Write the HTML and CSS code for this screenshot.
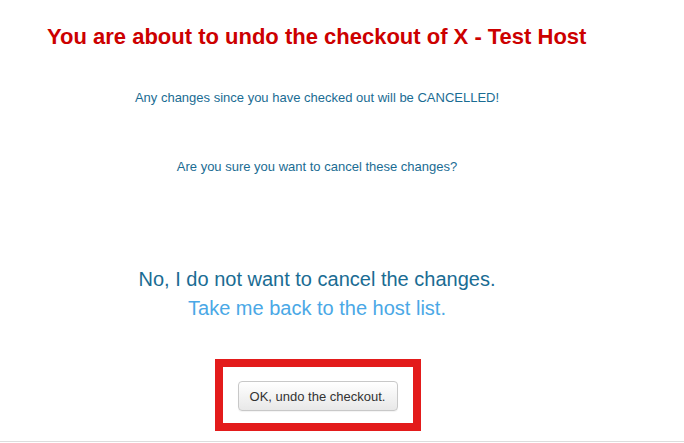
FILE: index.html
```html
<!DOCTYPE html>
<html lang="en">
<head>
    <meta charset="UTF-8">
    <title>Undo checkout</title>
    <link rel="stylesheet" href="styles.css">
</head>
<body>
    <div class="container">
        <h2 class="title">You are about to undo the checkout of X - Test Host</h2>
        <p class="warning">Any changes since you have checked out will be CANCELLED!</p>
        <p class="question">Are you sure you want to cancel these changes?</p>
        <div class="back">
            <p class="no">No, I do not want to cancel the changes.</p>
            <a href="#" class="back-link">Take me back to the host list.</a>
        </div>
        <div class="confirm">
            <div class="highlight">
                <button class="btn">OK, undo the checkout.</button>
            </div>
        </div>
    </div>
    <div class="rule"></div>
</body>
</html>
```

FILE: styles.css
```css
body {
    font-family: 'Liberation Sans', Arial, sans-serif;
    background-color: #ffffff;
    color: #1a6c93;
    margin: 0;
    height: 443px;
    overflow: hidden;
}

.container {
    width: 634px;
    text-align: center;
}

.title {
    margin: 0;
    padding: 24px 0 0 47px;
    text-align: left;
    font-size: 22px;
    line-height: 26px;
    font-weight: bold;
    color: #cc0000;
}

.warning {
    margin: 39px 0 0;
    font-size: 13px;
    line-height: 18px;
}

.question {
    margin: 51px 0 0;
    font-size: 13px;
    line-height: 18px;
}

.back {
    margin-top: 89px;
}

.no {
    margin: 0;
    font-size: 20px;
    line-height: 29px;
}

.back-link {
    display: block;
    font-size: 20px;
    line-height: 28px;
    color: #4aa8e6;
    text-decoration: none;
}

.confirm {
    margin-top: 37px;
    display: flex;
    justify-content: center;
}

.highlight {
    border: 8px solid #e31b1b;
    padding: 14px 15px 12px;
    margin-left: 1px;
}

.btn {
    font-family: 'Liberation Sans', Arial, sans-serif;
    font-size: 13px;
    color: #333;
    width: 160px;
    height: 30px;
    background: linear-gradient(#ffffff, #e8e8e8);
    border: 1px solid #c8c8c8;
    border-radius: 4px;
    box-shadow: 0 1px 1px rgba(0, 0, 0, 0.05);
    cursor: pointer;
}

.rule {
    margin-top: 10px;
    border-top: 1px solid #dddddd;
}
```
